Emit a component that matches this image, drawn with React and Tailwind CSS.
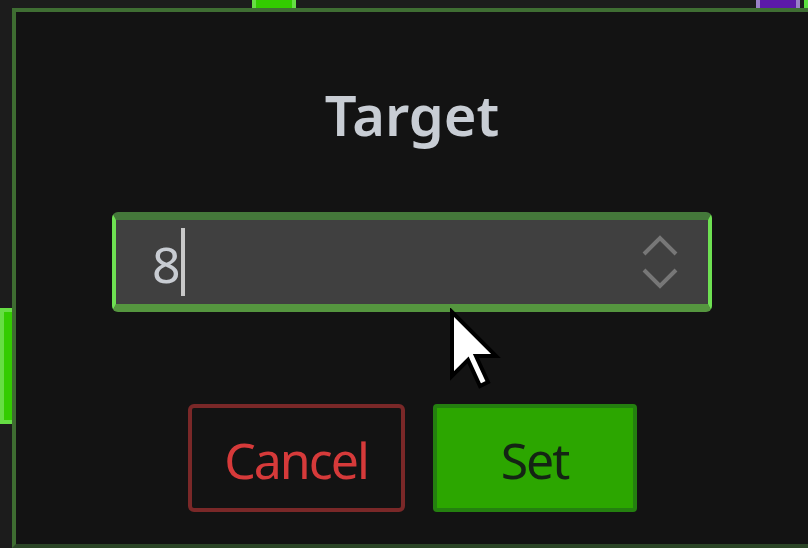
import React from "react";

export default function App() {
  return (
    <div className="relative w-[808px] h-[548px] overflow-hidden bg-[#1c1c1c] flex flex-col font-['Noto_Sans','Open_Sans',sans-serif]">
      {/* top strip with partially visible tabs */}
      <div className="h-2 flex shrink-0">
        <div className="ml-[252px] w-[44px] h-2 bg-[#33cc00] border-x-4 border-[#66dd44]" />
        <div className="ml-[460px] w-[44px] h-2 bg-[#5c1aa8] border-x-4 border-[#9a80c8]" />
        <div className="ml-1 w-1 h-2 bg-[#5ce040]" />
      </div>
      <div className="flex flex-1">
        {/* left strip */}
        <div className="w-3 shrink-0 flex flex-col">
          <div className="mt-[300px] w-3 h-[116px] bg-[#33cc00] border-l-4 border-y-4 border-[#66dd44]" />
        </div>
        {/* dialog */}
        <div className="flex-1 bg-[#131313] border-t-4 border-l-4 border-b-4 border-t-[#3f6e33] border-l-[#3e6c31] border-b-[#2b4526] flex flex-col items-center">
          <div className="mt-[70px] text-[56px] leading-[64px] font-semibold text-[#c8cdd4]">
            Target
          </div>
          <div className="mt-[66px] w-[600px] h-[100px] rounded-md border-x-4 border-x-[#6ee052] border-t-[8px] border-t-[#44783a] border-b-[8px] border-b-[#55963f] bg-[#404040] flex items-center pl-9">
            <span className="text-[50px] leading-[68px] text-[#c8ccd2] mt-1">8</span>
            <div className="w-1 h-[68px] bg-[#c8c8c8]" />
            <svg className="ml-auto mr-[28px]" width="40" height="60" viewBox="0 0 40 60" fill="none">
              <path d="M4 22 L20 6 L36 22" stroke="#777777" strokeWidth="4" />
              <path d="M4 38 L20 54 L36 38" stroke="#777777" strokeWidth="4" />
            </svg>
          </div>
          <div className="mt-[92px] flex gap-7">
            <button className="w-[217px] h-[108px] rounded-md border-4 border-[#7a2828] bg-transparent flex items-center justify-center pt-1 text-[50px] leading-[68px] tracking-[-2px] text-[#d63a3a]">
              Cancel
            </button>
            <button className="w-[204px] h-[108px] rounded border-4 border-[#24800f] bg-[#2ca600] flex items-center justify-center pt-1 text-[50px] leading-[68px] tracking-[-2px] text-[#142414]">
              Set
            </button>
          </div>
        </div>
      </div>
      {/* mouse pointer */}
      <svg className="absolute left-[448px] top-[308px]" width="56" height="84" viewBox="0 0 56 84">
        <path d="M4 4 L4 68 L20 52 L32 78 L40 74 L28 48 L48 48 Z" fill="#ffffff" stroke="#000000" strokeWidth="4" strokeLinejoin="miter" />
      </svg>
    </div>
  );
}
